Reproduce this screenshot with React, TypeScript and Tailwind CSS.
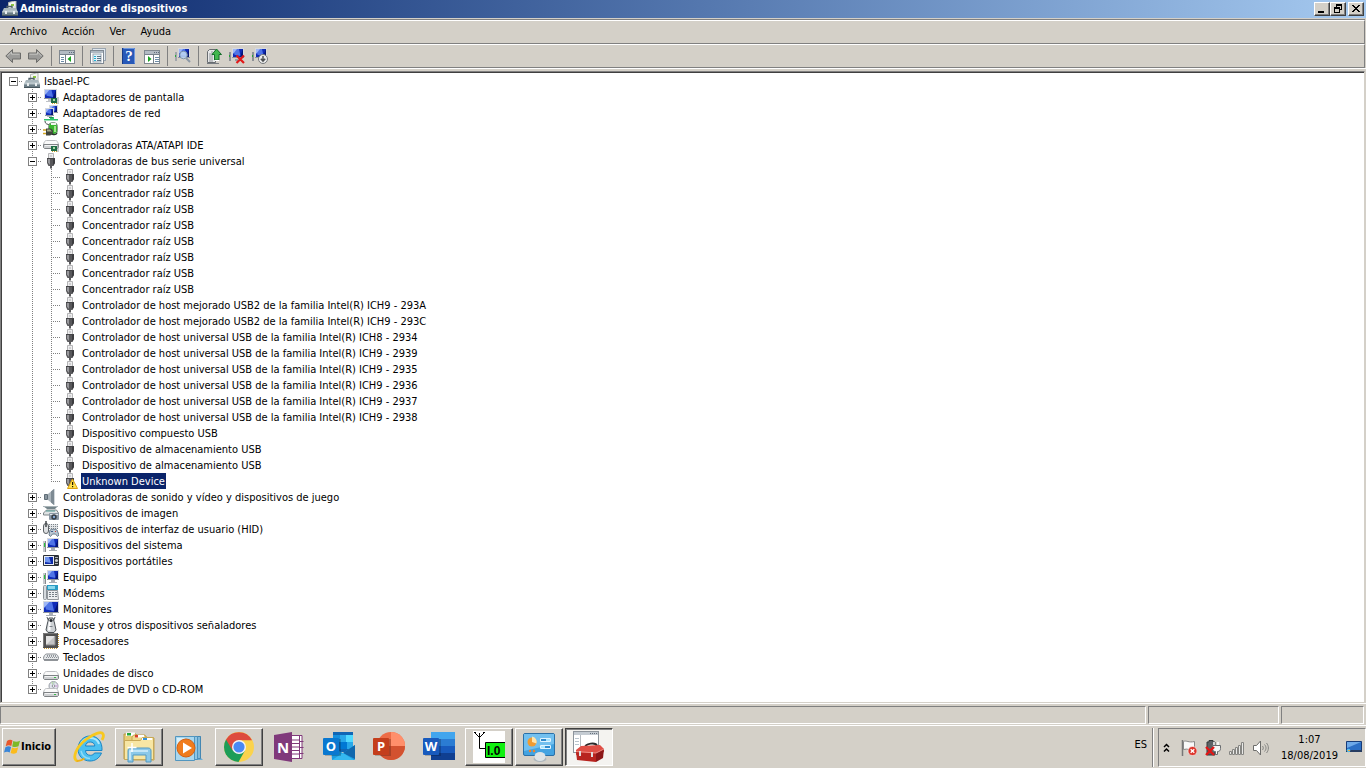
import { useState } from 'react'
import type { ReactNode } from 'react'

type TreeGroup = {
  name: string
  icon: ReactNode
  children?: string[]
}

type IconProps = { size?: number; children: ReactNode }

const RAISED =
  'border border-t-white border-l-white border-r-[#404040] border-b-[#404040] shadow-[inset_-1px_-1px_0_#808080]'
const SUNKEN = 'border border-t-[#808080] border-l-[#808080] border-r-white border-b-white'

function Icon({ size = 16, children }: IconProps) {
  return (
    <svg width={size} height={size} viewBox={`0 0 ${size} ${size}`} className="block shrink-0" aria-hidden="true">
      {children}
    </svg>
  )
}

/* ---------- tree icons, 16x16 ---------- */

function ComputerToolIcon() {
  return (
    <Icon>
      <path d="M6.5 1.500l6-1.500h1.500v9H6.500z" fill="#f3f4f2" stroke="#b0b4b2" />
      <path d="M9 3h3v2H9z" fill="#8cc63f" />
      <path d="M8 5h5v3H8z" fill="#dfe3e2" />
      <path d="M5 8V5.500h5V8" fill="none" stroke="#4f6068" strokeWidth="1.300" />
      <path d="M2 7h12l2 4H0z" fill="#a9b7bd" />
      <path d="M0 11h16v4H0z" fill="#6b7d86" />
      <path d="M0 11h16M1 10h14" stroke="#c6d0d4" strokeWidth="0.800" />
      <path d="M0 14.500h16" stroke="#46545b" />
      <path d="M3 10h2v3H3zM11 10h2v3h-2z" fill="#e9eef0" />
    </Icon>
  )
}

function Screen({ x = 2, y = 1, w = 12, h = 9 }: { x?: number; y?: number; w?: number; h?: number }) {
  return (
    <g>
      <rect x={x} y={y} width={w} height={h} fill="#d6d9de" />
      <path d={`M${x} ${y + h - 0.5}h${w}`} stroke="#8f959d" />
      <rect x={x + 1} y={y + 1} width={w - 2} height={h - 2} fill="#0f2bb8" />
      <path d={`M${x + 1} ${y + 1}h${w / 2}l${w / 8} ${h - 3}l${-w / 2} ${-h / 8}z`} fill="#4f74e6" />
      <path d={`M${x + 1} ${y + 1}h${w / 3}l-${w / 3} ${h / 2}z`} fill="#9db6f6" />
      <path d={`M${x + w - 1} ${y + 1}v${h - 2}h-${w / 4}z`} fill="#061674" />
    </g>
  )
}

function DisplayIcon() {
  return (
    <Icon>
      <Screen x={1} y={0} w={13} h={10} />
      <path d="M5 10h4v2H5zM3 12h6v1H3z" fill="#c0c3c8" />
      <rect x="8" y="9" width="6" height="5" fill="#1e6b45" />
      <path d="M10 10h2v2h-2z" fill="#a8d9a4" />
      <path d="M9 14h1v1H9zM11 14h1v1h-1zM13 14h1v1h-1z" fill="#d5a733" />
      <path d="M15 8v7" stroke="#8f9797" />
    </Icon>
  )
}

function NetworkIcon() {
  return (
    <Icon>
      <Screen x={6} y={0} w={9} h={8} />
      <Screen x={2} y={3} w={9} h={8} />
      <path d="M4 11h5v1H4z" fill="#b5bac2" />
      <path d="M7 12h4v2h4v1.500H1V14h6z" fill="#31c26b" />
      <path d="M6 12.500h4" stroke="#1d8f4a" />
    </Icon>
  )
}

function BatteryIcon() {
  return (
    <Icon>
      <path d="M2 0c0 3 2 3 5 4" fill="none" stroke="#42494a" />
      <rect x="5.500" y="1.500" width="9" height="12" rx="4" fill="#38b72f" stroke="#8b968e" />
      <path d="M8 2h5v2H8z" fill="#f2f6f0" />
      <path d="M11 5h2v6h-2z" fill="#a4e68e" />
      <path d="M0 9h4M0 12.500h4" stroke="#d4a724" strokeWidth="1.500" />
      <path d="M3 7.500h4c2 0 3 1.500 3 3s-1 4-3 4H3z" fill="#41453d" />
      <path d="M4 8.500h3l2 2H4z" fill="#a3a98a" />
      <path d="M9 13c3 1 4 1 5-1" fill="none" stroke="#2d302d" strokeWidth="1.400" />
    </Icon>
  )
}

function DriveShape({ y = 0 }: { y?: number }) {
  return (
    <g transform={`translate(0 ${y})`}>
      <path d="M3.500 4.500h9c1.500 0 2.500 1.500 3 4H0.500c0.500-2.500 1.500-4 3-4z" fill="#fafafa" stroke="#bcbec1" />
      <path d="M0.500 8.500h15v3l-1 1h-13l-1-1z" fill="#cfd1d3" stroke="#7e8285" />
      <path d="M2 9.500h12" stroke="#f2f3f4" />
      <path d="M11 10h2v1h-2z" fill="#39b64a" />
    </g>
  )
}

function IdeIcon() {
  return (
    <Icon>
      <DriveShape y={-1} />
      <rect x="8" y="9" width="6" height="5" fill="#1e6b45" />
      <path d="M10 10h2v2h-2z" fill="#a8d9a4" />
      <path d="M9 14h1v1H9zM11 14h1v1h-1zM13 14h1v1h-1z" fill="#c7a02d" />
      <path d="M15 8v7" stroke="#8f9797" />
    </Icon>
  )
}

function UsbShape() {
  return (
    <g>
      <path d="M5.500 0.500h5v5h-5z" fill="#ededee" stroke="#b4b4b6" />
      <path d="M7 2h2v2H7z" fill="#cfcfd1" />
      <path d="M4 5h8v5l-1.500 3H9v2.500H7V13H5.500L4 10z" fill="#58585b" />
      <path d="M5 6h2v6l-2-2.500z" fill="#98989c" />
      <path d="M10 6h2v4l-2 2.500z" fill="#3c3c3f" />
      <path d="M4 5.500h8" stroke="#444447" />
    </g>
  )
}

function UsbIcon() {
  return (
    <Icon>
      <UsbShape />
    </Icon>
  )
}

function UsbWarningIcon() {
  return (
    <Icon>
      <UsbShape />
      <path d="M10.500 6L15.500 15.500H5.500z" fill="#ffe04a" stroke="#dba012" strokeLinejoin="round" />
      <path d="M10 9h1.200v3H10zM10 13h1.200v1.300H10z" fill="#1c1500" />
    </Icon>
  )
}

function SoundIcon() {
  return (
    <Icon>
      <path d="M1.500 5.500h3v5h-3z" fill="#8a969f" stroke="#5f6c76" />
      <path d="M5 5L11 0v16L5 11z" fill="#aab4bb" />
      <path d="M8 2.500L11 0v16l-3-2.500z" fill="#7d8a93" />
      <path d="M11.500 0v16" stroke="#d2d8dc" />
    </Icon>
  )
}

function ImagingIcon() {
  return (
    <Icon>
      <path d="M0 1h15l-3 3H4z" fill="#75858b" />
      <path d="M0 1.500h15" stroke="#a9b4b8" />
      <path d="M0.500 8l3-3h10l2 3v2H0.500z" fill="#dfe3e4" stroke="#7a8488" />
      <path d="M3 6h9" stroke="#4f9a93" />
      <rect x="6" y="8" width="10" height="7" rx="1" fill="#8b98a5" />
      <rect x="7" y="9" width="8" height="1" fill="#dde3e8" />
      <circle cx="11" cy="12" r="2.700" fill="#343c44" />
      <circle cx="11" cy="12" r="1.200" fill="#83a8d6" />
    </Icon>
  )
}

function HidIcon() {
  return (
    <Icon>
      <rect x="0.500" y="2.500" width="5" height="10" rx="2.500" fill="#dfe1e3" stroke="#5c6165" />
      <path d="M3 0v6" stroke="#41464a" strokeWidth="1.500" />
      <path d="M6 3h9v5H6z" fill="#e2e5e7" />
      <path d="M6 3.500h9M6 5.500h9M6 7.500h9" stroke="#7b8288" strokeDasharray="1 1" />
      <path d="M7 9c2-1 5-1 7 0l2 5-1.500 1.500-2-2.500h-3l-2 2.500L6 14z" fill="#bac7d2" stroke="#6d7f8e" />
      <path d="M8 10h2v1H8z" fill="#3c5c88" />
      <path d="M12 10h1v1h-1z" fill="#cf3d33" />
    </Icon>
  )
}

function SystemIcon() {
  return (
    <Icon>
      <path d="M0 4h3v11H0z" fill="#c5c9cd" />
      <path d="M2.500 4v11" stroke="#858a8f" />
      <path d="M1 6h1v4H1z" fill="#26c43a" />
      <Screen x={4} y={1} w={12} h={10} />
      <path d="M8 11h4v2H8zM6 13h8v1H6z" fill="#a9aeb5" />
    </Icon>
  )
}

function PortableIcon() {
  return (
    <Icon>
      <rect x="0" y="2" width="16" height="11" rx="1" fill="#2c3138" />
      <rect x="1" y="3" width="10" height="9" fill="#e8ecf2" />
      <rect x="2" y="4" width="8" height="7" fill="#0d2aa8" />
      <path d="M2 4h4l2 6-6-1z" fill="#6f94ef" />
      <circle cx="13.500" cy="7.500" r="1.600" fill="#c9cdd2" />
      <path d="M12 4.500h3M12 10.500h3" stroke="#aeb4ba" />
    </Icon>
  )
}

function ModemIcon() {
  return (
    <Icon>
      <rect x="0.500" y="0.500" width="3" height="14" rx="1" fill="#d6dade" stroke="#8b9197" />
      <path d="M4 0h11v5H4z" fill="#2a9cc4" />
      <path d="M5 1h7v3H5z" fill="#8ad8ec" />
      <path d="M4.500 5.500h10l1 9h-11z" fill="#eceef0" stroke="#92979c" />
      <path d="M6 7.500h8M6 9.500h8M6 11.500h8" stroke="#777f87" strokeDasharray="2 1" />
    </Icon>
  )
}

function MonitorIcon() {
  return (
    <Icon>
      <Screen x={0} y={0} w={16} h={12} />
      <path d="M6 12h4v2H6zM3 14h10v1H3z" fill="#a9aeb5" />
    </Icon>
  )
}

function MouseIcon() {
  return (
    <Icon>
      <path d="M4 0l1.500 4M12 0l-1.500 4" stroke="#555c61" />
      <path d="M6 1h4l1.500 5 1.500 7-2 2.500H5L3 13l1.500-7z" fill="#cdd1d4" stroke="#4a5055" />
      <path d="M6 2.500L5 13.500h2.500V2.500z" fill="#fff" />
      <circle cx="8" cy="3.500" r="1.600" fill="#252b30" />
      <path d="M6.500 9h3v1h-3z" fill="#7a8188" />
    </Icon>
  )
}

function CpuIcon() {
  return (
    <Icon>
      <path d="M1 15.500h14M15.500 1v14" stroke="#c79a34" strokeDasharray="1 1" />
      <rect x="0" y="0" width="15" height="15" fill="#505050" />
      <path d="M0.500 14V0.500H14" fill="none" stroke="#7a7a7a" />
      <rect x="3" y="3" width="9" height="9" fill="#c4c4c4" />
      <path d="M3 12V3h9z" fill="#e2e2e2" />
      <path d="M3 12h9V3" fill="none" stroke="#8b8b8b" />
    </Icon>
  )
}

function KeyboardIcon() {
  return (
    <Icon>
      <path d="M3.500 5h9c1.500 0 3 2.500 3 4.500 0 1-0.500 1.500-1.500 1.500H2c-1 0-1.500-0.500-1.500-1.500C0.500 7.500 2 5 3.500 5z" fill="#e6e8ea" stroke="#868b90" />
      <path d="M4 6.500h9M3 8.500h11" stroke="#8b9197" strokeDasharray="1 1" />
      <path d="M3 7.500h10" stroke="#9ca1a6" strokeDasharray="1 1" strokeDashoffset="1" />
      <path d="M1 11h14" stroke="#5f656b" />
    </Icon>
  )
}

function DiskIcon() {
  return (
    <Icon>
      <DriveShape y={2} />
    </Icon>
  )
}

function DvdIcon() {
  return (
    <Icon>
      <circle cx="10.500" cy="5" r="4.500" fill="#e3e6ee" stroke="#989ca5" />
      <path d="M10.500 5L8 1.500l4-1z" fill="#b6dca9" />
      <path d="M10.500 5l4-1.500v3z" fill="#d6b8df" />
      <DriveShape y={3} />
      <circle cx="10.500" cy="5" r="1.300" fill="#fff" stroke="#8c9099" />
      <path d="M10.500 1v3" stroke="#c0c6d6" />
    </Icon>
  )
}

/* ---------- toolbar icons ---------- */

function ArrowIcon({ flip = false }: { flip?: boolean }) {
  return (
    <Icon>
      <g transform={flip ? 'translate(16 0) scale(-1 1)' : undefined}>
        <path d="M0.800 8L7.500 1.500V5h8v6h-8v3.500z" fill="#9b9b99" stroke="#6c6c6a" strokeLinejoin="round" />
        <path d="M2.500 8l4-4v2.200h8" fill="none" stroke="#c4c4c1" />
      </g>
    </Icon>
  )
}

function ConsoleTreeIcon({ right = false }: { right?: boolean }) {
  return (
    <Icon>
      <rect x="0.500" y="2.500" width="15" height="13" fill="#fff" stroke="#808890" />
      <rect x="1" y="3" width="14" height="3" fill="#b3bbc4" />
      <path d="M10 4.500h5" stroke="#5f6c7b" strokeDasharray="1 1" />
      <path d="M1 6.500h14" stroke="#77818c" />
      <path d={right ? 'M9.500 7v8' : 'M6.500 7v8'} stroke="#77818c" />
      <path d={right ? 'M11 9.500h4M11 11.500h4M11 13.500h4' : 'M2 9.500h3M2 11.500h3M2 13.500h3'} stroke="#6c8ca8" />
      <path d={right ? 'M4 8l3.500 3L4 14z' : 'M12 8l-3.500 3L12 14z'} fill="#1aa321" />
    </Icon>
  )
}

function PropertiesIcon() {
  return (
    <Icon>
      <rect x="2.500" y="0.500" width="13" height="12" fill="#dfe7ef" stroke="#9ba5af" />
      <rect x="0.500" y="2.500" width="13" height="13" fill="#fff" stroke="#7f8993" />
      <path d="M1 4h12" stroke="#aeb8c2" strokeWidth="2" />
      <rect x="3" y="6" width="8" height="8" fill="#e3f3fb" stroke="#9aa5b0" />
      <path d="M4 8.500h2M4 10.500h2M4 12.500h2" stroke="#1bb2d4" />
      <path d="M7 8.500h4M7 10.500h4M7 12.500h4" stroke="#5f7385" />
    </Icon>
  )
}

function HelpIcon() {
  return (
    <Icon>
      <rect x="1" y="0" width="13" height="16" fill="#2859b8" />
      <path d="M1.500 0v16" stroke="#173b88" />
      <path d="M2.500 0.500h11v15" fill="none" stroke="#6f97dd" />
      <text x="8" y="13" textAnchor="middle" fontFamily="Liberation Serif, serif" fontWeight="bold" fontSize="15" fill="#fff">
        ?
      </text>
    </Icon>
  )
}

function ScanIcon() {
  return (
    <Icon>
      <path d="M0 4h2v9H0z" fill="#a2a6ac" />
      <path d="M0 7h1v2H0z" fill="#2bab3a" />
      <Screen x={3} y={0} w={12} h={10} />
      <circle cx="8.500" cy="7" r="3.800" fill="#c3dcf3" fillOpacity="0.850" stroke="#7f94aa" />
      <path d="M11 10l4 4" stroke="#8d98a5" strokeWidth="2" />
    </Icon>
  )
}

function UpdateDriverIcon() {
  return (
    <Icon>
      <path d="M1.500 3.500l2-2h6v13h-8z" fill="#e7e8e9" stroke="#686c70" />
      <path d="M4 5v9M6 3v11" stroke="#8f9498" />
      <path d="M1 15.500h12" stroke="#767b80" />
      <path d="M10.500 1L15.500 6.500H13V12H8.500V6.500H6z" fill="#41b74e" stroke="#146d2a" strokeLinejoin="round" />
      <path d="M8.500 12.500h4.500" stroke="#fff" />
    </Icon>
  )
}

function UninstallIcon() {
  return (
    <Icon>
      <path d="M1 4v9" stroke="#8d9196" strokeWidth="2" />
      <path d="M0 7h1v2H0z" fill="#26a437" />
      <Screen x={3} y={0} w={12} h={10} />
      <path d="M6 11h3v2H6z" fill="#999fa7" />
      <path d="M7.500 7.500l7.500 7.500M15 7.500L7.500 15" stroke="#e11919" strokeWidth="2.200" />
    </Icon>
  )
}

function DisableIcon() {
  return (
    <Icon>
      <path d="M1 4v9" stroke="#8d9196" strokeWidth="2" />
      <path d="M0 7h1v2H0z" fill="#26a437" />
      <Screen x={3} y={0} w={12} h={10} />
      <circle cx="11" cy="11" r="4.500" fill="#ececec" stroke="#75787b" />
      <path d="M11 8v5M8.800 10.800L11 13.200l2.200-2.400" fill="none" stroke="#4d5052" strokeWidth="1.500" />
    </Icon>
  )
}

/* ---------- taskbar icons, 32x32 ---------- */

function WindowsFlagIcon() {
  return (
    <Icon>
      <path d="M3 2c2-1.500 4-1.500 5.500-0.500L7.300 7C5.500 6.100 4 6.100 1.700 7.200z" fill="#e8572b" />
      <path d="M9.300 2c2 1 4 1 6.700-0.200L14.500 7.300c-2.200 1.100-4.300 1-6.300 0.100z" fill="#7db928" />
      <path d="M1.400 8.200c2.200-1.200 4-1.100 5.700-0.200L5.700 13.500C4 12.500 2.200 12.500 0 13.500z" fill="#3a86d8" />
      <path d="M8 8.400c1.900 1 4 1 6.200-0.200l-1.500 5.500c-2.200 1.200-4.100 1.200-6.100 0.200z" fill="#fbbb1c" />
    </Icon>
  )
}

function ExplorerBrowserIcon() {
  return (
    <Icon size={32}>
      <path
        d="M28.500 22C26 28 21.500 30 17 30 10 30 5 25 5 18S10 5 17 5c7.500 0 12.500 5.500 12 14.500H12.500c0 3 2 4.800 5 4.800 2 0 3.300-0.800 4-2.300zM12.500 15h9.300c-0.300-2.600-2-4-4.600-4s-4.400 1.400-4.700 4z"
        fill="#4cc0f0"
        stroke="#1b86c6"
      />
      <path d="M8 13c2-4 5-6 9-6 4.500 0 8 2.500 9 6" fill="none" stroke="#aee8fc" strokeWidth="2" />
      <path d="M8 20c1 4 4 7.500 9 7.500" fill="none" stroke="#8fdcf8" strokeWidth="1.500" />
      <path d="M4 30C-1 27 3 16 13 8.500 21 2.500 28.500 0 30 3c0.800 1.500 0.500 3.500-1 6" fill="none" stroke="#f8c81f" strokeWidth="2.800" />
      <path d="M3.500 30c3 0.500 5-0.500 8-2.500" fill="none" stroke="#eeb118" strokeWidth="2" />
    </Icon>
  )
}

function FoldersIcon() {
  return (
    <Icon size={32}>
      <path d="M1 3h12l2 3h9v22H1z" fill="#e7cd77" stroke="#b99a45" />
      <path d="M3 1.500h9V5H3z" fill="#fff" />
      <path d="M4 2h4v2.500H4z" fill="#25a83c" />
      <path d="M9 6l1.500-2H22l1.500 3H31v22H9z" fill="#f0da8d" stroke="#c3a451" />
      <path d="M12 4h9v2.500h-9z" fill="#fff" />
      <path d="M12 4h3v2.500h-3z" fill="#d8402b" />
      <path d="M1.500 9.500h16l2-3h11v22h-29z" fill="#f7e6a4" stroke="#c8a957" />
      <path d="M19 7h10v2H19z" fill="#fff" />
      <path d="M20 7h4v2h-4z" fill="#3592da" />
      <path d="M5 31V20c0-2 1-3 3-3h17c2 0 3 1 3 3v11h-5v-7H10v7z" fill="#8cc9e9" stroke="#5299c1" />
      <path d="M7 29v-9h18" fill="none" stroke="#d5effb" strokeWidth="1.500" />
      <path d="M9 12v9M4.500 16.500h9" stroke="#fff" strokeWidth="1.500" />
    </Icon>
  )
}

function MediaPlayerIcon() {
  return (
    <Icon size={32}>
      <path d="M10 5h18v22l2 2H10z" fill="#6faed3" />
      <path d="M10 5.500h17.500v22L10 29z" fill="#7fb9da" stroke="#4487b2" />
      <path d="M7 5.500h17.500v23H7z" fill="#8fc6e4" stroke="#4c92bd" />
      <path d="M2.500 5.500h19v24h-19z" fill="#a9d7ee" stroke="#5296bf" />
      <path d="M4 7h8L4 20z" fill="#d9f0fa" />
      <circle cx="13" cy="17" r="9" fill="#f07c1d" stroke="#d45f10" />
      <path d="M10 11.500l9 5.500-9 5.500z" fill="#fff" />
    </Icon>
  )
}

function ChromeIcon() {
  return (
    <Icon size={32}>
      <circle cx="16" cy="16" r="15" fill="#fbd34c" />
      <path d="M3 8.500A15 15 0 0 0 15.500 31L22 19.500 16 16z" fill="#1c9d58" />
      <path d="M3 8.500L9.500 19.500 16 9.200h13A15 15 0 0 0 3 8.500z" fill="#dd4b3e" />
      <circle cx="16" cy="16" r="7" fill="#f4f4f4" />
      <circle cx="16" cy="16" r="5.600" fill="#4a89f4" />
    </Icon>
  )
}

function OneNoteIcon() {
  return (
    <Icon size={32}>
      <path d="M17 4.500h12v23H17z" fill="#fff" stroke="#80397b" />
      <path d="M18 9h8M18 12.500h8M18 16h8M18 19.500h8M18 23h8" stroke="#80397b" />
      <path d="M26.500 5v22M27 10.500h3.500M27 16.500h3.500M27 22.500h3.500" stroke="#80397b" />
      <path d="M1 4l18-3v30L1 28z" fill="#80397b" />
      <text x="10" y="21.500" textAnchor="middle" fontFamily="Open Sans, sans-serif" fontWeight="bold" fontSize="15" fill="#fff">
        N
      </text>
    </Icon>
  )
}

function LetterTile({ letter, color }: { letter: string; color: string }) {
  return (
    <g>
      <path d="M2 8h16v17H2z" fill="#000" fillOpacity="0.200" />
      <rect x="0" y="7" width="16" height="17" rx="1" fill={color} />
      <text x="8" y="20" textAnchor="middle" fontFamily="Open Sans, sans-serif" fontWeight="bold" fontSize="13" fill="#fff">
        {letter}
      </text>
    </g>
  )
}

function OutlookIcon() {
  return (
    <Icon size={32}>
      <rect x="10" y="1" width="20" height="20" fill="#1066b5" />
      <path d="M10 4h7v7h-7z" fill="#1490df" />
      <path d="M17 4h6v7h-6z" fill="#28a8ea" />
      <path d="M23 4h7v7h-7z" fill="#50d9ff" />
      <path d="M17 11h7v7h-7z" fill="#0078d4" />
      <path d="M24 11h6v7h-6z" fill="#28a8ea" />
      <path d="M8 16l12 6 12-8v14c0 1-1 1-1 1H9z" fill="#1b9de2" />
      <path d="M32 14v14L20 22z" fill="#1167ad" />
      <path d="M9 29l11-7 11 7z" fill="#35b8f1" />
      <LetterTile letter="O" color="#0a78d0" />
    </Icon>
  )
}

function PowerPointIcon() {
  return (
    <Icon size={32}>
      <circle cx="18" cy="15" r="14" fill="#ed6c47" />
      <path d="M18 1a14 14 0 0 1 14 14H18z" fill="#ff8f6b" />
      <path d="M4 15h28a14 14 0 0 1-28 0z" fill="#d35230" />
      <LetterTile letter="P" color="#c43e1c" />
    </Icon>
  )
}

function WordIcon() {
  return (
    <Icon size={32}>
      <path d="M8 1h24v7H8z" fill="#41a5ee" />
      <path d="M8 8h24v7H8z" fill="#2b7cd3" />
      <path d="M8 15h24v7H8z" fill="#185abd" />
      <path d="M8 22h24v7H8z" fill="#103f91" />
      <LetterTile letter="W" color="#185abd" />
    </Icon>
  )
}

function AntennaAppIcon() {
  return (
    <Icon size={32}>
      <rect width="32" height="32" fill="#fff" />
      <path d="M6.500 2v15.500H12M1.500 1.500l5 5 5-5M1 1.500h2M10 1.500h2" fill="none" stroke="#000" />
      <path d="M32 11.500H12.500v15H32" fill="#10f010" stroke="#000" />
      <text x="14" y="24" fontFamily="Liberation Sans, sans-serif" fontWeight="bold" fontSize="12" fill="#000">
        I.0
      </text>
    </Icon>
  )
}

function ControlPanelIcon() {
  return (
    <Icon size={32}>
      <rect x="0.500" y="2.500" width="31" height="22" rx="1.500" fill="#43a3e1" stroke="#2b70a7" />
      <path d="M1 3h30v10L1 20z" fill="#72c0ef" />
      <circle cx="9" cy="11" r="4.500" fill="#f09b32" />
      <path d="M9 11V5.500a5.500 5.500 0 0 1 4.500 7z" fill="#ffe4aa" />
      <circle cx="7" cy="20" r="1.200" fill="#f2832b" />
      <circle cx="11" cy="20" r="1.200" fill="#f2832b" />
      <path d="M17.500 7.500h10v3h-10zM17.500 14.500h10v3h-10z" fill="#318bcd" stroke="#e0f4ff" />
      <path d="M23 8h4v2h-4zM18 15h4v2h-4z" fill="#a6e4ff" />
      <ellipse cx="17" cy="28" rx="6.500" ry="3" fill="#aeb7bd" />
      <ellipse cx="17" cy="25.500" rx="5.500" ry="4.500" fill="#dde3e6" />
    </Icon>
  )
}

function ToolboxIcon() {
  return (
    <Icon size={32}>
      <rect x="0.500" y="0.500" width="25" height="21" fill="#fff" stroke="#8d949b" />
      <path d="M1 2.500h24" stroke="#c4cbd2" strokeWidth="3" />
      <path d="M17 2.500h7" stroke="#65707b" strokeDasharray="1 1" />
      <path d="M7.500 4v17" stroke="#b5bbc0" />
      <path d="M2 7.500h4M2 10.500h4M2 13.500h4" stroke="#b9c4cd" />
      <path d="M12 17c0-5 11-6 12-2" fill="none" stroke="#2b2b2b" strokeWidth="2" />
      <path d="M3 19l5-4 19-1 4 4v3L3 24z" fill="#df4e45" />
      <path d="M3 21l20 1v9L4 29z" fill="#b8241f" />
      <path d="M23 22l8-4-1 9-7 4z" fill="#8c1719" />
      <path d="M3 20.500l20 1.500 8-4" fill="none" stroke="#f08a80" />
      <path d="M6 20h2v5H6zM18 21h2v5h-2z" fill="#dedede" />
    </Icon>
  )
}

/* ---------- tray icons ---------- */

function ActionFlagIcon() {
  return (
    <Icon>
      <path d="M1.500 0v16" stroke="#777" strokeWidth="1.500" />
      <path d="M2.500 1.500c3-1.500 5 1.500 11 0v8c-4 1.500-7-1.500-11 0z" fill="#f9f9f9" stroke="#888" />
      <circle cx="11.500" cy="11" r="4.500" fill="#dc3329" stroke="#fff" strokeWidth="0.600" />
      <path d="M9.700 9.200l3.600 3.600M13.300 9.200l-3.600 3.600" stroke="#fff" strokeWidth="1.400" />
    </Icon>
  )
}

function PowerIcon() {
  return (
    <Icon>
      <path d="M2 2h2V0.500h4V2h2v13H2z" fill="#5e6265" stroke="#34383a" />
      <path d="M9 2v4M13 2v4" stroke="#fff" strokeWidth="1.500" />
      <path d="M7.500 5.500h8v3c0 2-1 3-3 3v3h-2v-3c-2 0-3-1-3-3z" fill="#f6f6f6" stroke="#696d70" />
      <path d="M1 7l8 8M9 7l-8 8" stroke="#e31616" strokeWidth="2.400" />
    </Icon>
  )
}

function SignalIcon() {
  return (
    <Icon>
      <path
        d="M0.500 11.500h2v3h-2zM3.500 9.500h2v5h-2zM6.500 7.500h2v7h-2zM9.500 5.500h2v9h-2zM12.500 2.500h2v12h-2z"
        fill="#e9e9e7"
        stroke="#858582"
      />
    </Icon>
  )
}

function VolumeIcon() {
  return (
    <Icon>
      <path d="M0.500 5.500h3l4-4.500v14l-4-4.500h-3z" fill="#fff" stroke="#6c6c6a" />
      <path d="M9.500 6c1 1.300 1 2.700 0 4M11.500 4.500c2 2.200 2 4.800 0 7M13.500 3c2.500 3 2.500 7 0 10" fill="none" stroke="#858582" />
    </Icon>
  )
}

function DesktopIcon() {
  return (
    <Icon>
      <path d="M0.500 1.500h15v9h-15z" fill="#2c6fc5" stroke="#163b78" />
      <path d="M1 2h14L1 8z" fill="#6ea9e8" />
      <path d="M0 10h16v2H0z" fill="#263c61" />
      <circle cx="2.500" cy="10.500" r="1.800" fill="#53c0ed" />
      <path d="M2 10h2v1H2z" fill="#f5a936" />
    </Icon>
  )
}

/* ---------- data ---------- */

const USB_DEVICES = [
  ...Array.from({ length: 8 }, () => 'Concentrador raíz USB'),
  'Controlador de host mejorado USB2 de la familia Intel(R) ICH9 - 293A',
  'Controlador de host mejorado USB2 de la familia Intel(R) ICH9 - 293C',
  'Controlador de host universal USB de la familia Intel(R) ICH8 - 2934',
  'Controlador de host universal USB de la familia Intel(R) ICH9 - 2939',
  'Controlador de host universal USB de la familia Intel(R) ICH9 - 2935',
  'Controlador de host universal USB de la familia Intel(R) ICH9 - 2936',
  'Controlador de host universal USB de la familia Intel(R) ICH9 - 2937',
  'Controlador de host universal USB de la familia Intel(R) ICH9 - 2938',
  'Dispositivo compuesto USB',
  'Dispositivo de almacenamiento USB',
  'Dispositivo de almacenamiento USB',
  'Unknown Device',
]

const GROUPS: TreeGroup[] = [
  { name: 'Adaptadores de pantalla', icon: <DisplayIcon /> },
  { name: 'Adaptadores de red', icon: <NetworkIcon /> },
  { name: 'Baterías', icon: <BatteryIcon /> },
  { name: 'Controladoras ATA/ATAPI IDE', icon: <IdeIcon /> },
  { name: 'Controladoras de bus serie universal', icon: <UsbIcon />, children: USB_DEVICES },
  { name: 'Controladoras de sonido y vídeo y dispositivos de juego', icon: <SoundIcon /> },
  { name: 'Dispositivos de imagen', icon: <ImagingIcon /> },
  { name: 'Dispositivos de interfaz de usuario (HID)', icon: <HidIcon /> },
  { name: 'Dispositivos del sistema', icon: <SystemIcon /> },
  { name: 'Dispositivos portátiles', icon: <PortableIcon /> },
  { name: 'Equipo', icon: <SystemIcon /> },
  { name: 'Módems', icon: <ModemIcon /> },
  { name: 'Monitores', icon: <MonitorIcon /> },
  { name: 'Mouse y otros dispositivos señaladores', icon: <MouseIcon /> },
  { name: 'Procesadores', icon: <CpuIcon /> },
  { name: 'Teclados', icon: <KeyboardIcon /> },
  { name: 'Unidades de disco', icon: <DiskIcon /> },
  { name: 'Unidades de DVD o CD-ROM', icon: <DvdIcon /> },
]

const TOOLBAR: { label: string; icon: ReactNode }[][] = [
  [
    { label: 'Atrás', icon: <ArrowIcon /> },
    { label: 'Adelante', icon: <ArrowIcon flip /> },
  ],
  [{ label: 'Árbol de consola', icon: <ConsoleTreeIcon /> }],
  [{ label: 'Propiedades', icon: <PropertiesIcon /> }],
  [
    { label: 'Ayuda', icon: <HelpIcon /> },
    { label: 'Panel de acciones', icon: <ConsoleTreeIcon right /> },
  ],
  [{ label: 'Buscar cambios de hardware', icon: <ScanIcon /> }],
  [
    { label: 'Actualizar controlador', icon: <UpdateDriverIcon /> },
    { label: 'Desinstalar', icon: <UninstallIcon /> },
    { label: 'Deshabilitar', icon: <DisableIcon /> },
  ],
]

const TASKS: { label: string; icon: ReactNode; state: 'pinned' | 'open' | 'active' }[] = [
  { label: 'Internet Explorer', icon: <ExplorerBrowserIcon />, state: 'pinned' },
  { label: 'Explorador de Windows', icon: <FoldersIcon />, state: 'open' },
  { label: 'Reproductor de Windows Media', icon: <MediaPlayerIcon />, state: 'pinned' },
  { label: 'Google Chrome', icon: <ChromeIcon />, state: 'open' },
  { label: 'OneNote', icon: <OneNoteIcon />, state: 'pinned' },
  { label: 'Outlook', icon: <OutlookIcon />, state: 'pinned' },
  { label: 'PowerPoint', icon: <PowerPointIcon />, state: 'pinned' },
  { label: 'Word', icon: <WordIcon />, state: 'pinned' },
  { label: 'Antena', icon: <AntennaAppIcon />, state: 'open' },
  { label: 'Panel de control', icon: <ControlPanelIcon />, state: 'open' },
  { label: 'Administrador de dispositivos', icon: <ToolboxIcon />, state: 'active' },
]

const TASK_STYLE = {
  pinned: '',
  open: RAISED,
  active:
    'border border-t-[#404040] border-l-[#404040] border-r-white border-b-white bg-[#f4f3f0] shadow-[inset_1px_1px_0_#808080]',
}

/* ---------- tree ---------- */

function Expander({ open, label, onClick }: { open: boolean; label: string; onClick: () => void }) {
  return (
    <button type="button" aria-label={label} aria-expanded={open} onClick={onClick} className="block size-[9px] bg-white">
      <svg width="9" height="9" viewBox="0 0 9 9" className="block" shapeRendering="crispEdges">
        <rect x="0.500" y="0.500" width="8" height="8" fill="#fff" stroke="#808080" />
        <path d={open ? 'M2 4.500h5' : 'M2 4.500h5M4.500 2v5'} stroke="#000" />
      </svg>
    </button>
  )
}

const DOTS =
  'bg-[image:repeating-linear-gradient(#808080_0_1px,transparent_1px_2px),repeating-linear-gradient(90deg,#808080_0_1px,transparent_1px_2px)] bg-no-repeat bg-[position:9px_0,9px_8px]'

/** Celda de 19px con la guía punteada; el nodo final solo dibuja la mitad superior. */
function Cell({ guide, children }: { guide: 'none' | 'root' | 'line' | 'branch' | 'last'; children?: ReactNode }) {
  const size = {
    none: 'bg-none',
    root: `${DOTS} bg-[length:0px_0px,10px_1px]`,
    line: `${DOTS} bg-[length:1px_16px,0px_0px]`,
    branch: `${DOTS} bg-[length:1px_16px,10px_1px]`,
    last: `${DOTS} bg-[length:1px_9px,10px_1px]`,
  }[guide]
  return <span className={`flex h-4 w-[19px] shrink-0 items-center justify-center ${size}`}>{children}</span>
}

type NodeLabelProps = { icon: ReactNode; text: string; selected: boolean; onSelect: () => void }

function NodeLabel({ icon, text, selected, onSelect }: NodeLabelProps) {
  return (
    <button type="button" onClick={onSelect} className="ml-px flex h-4 items-center gap-[3px] whitespace-nowrap">
      {icon}
      <span className={`h-4 px-px leading-[17px] ${selected ? 'bg-[#0a246a] text-white' : ''}`}>{text}</span>
    </button>
  )
}

function DeviceTree() {
  const [rootOpen, setRootOpen] = useState(true)
  const [expanded, setExpanded] = useState<string[]>(['Controladoras de bus serie universal'])
  const [selected, setSelected] = useState('usb-19')

  const toggle = (name: string) =>
    setExpanded((prev) => (prev.includes(name) ? prev.filter((n) => n !== name) : [...prev, name]))

  return (
    <ul className="pl-0.5">
      <li>
        <div className="flex">
          <Cell guide="root">
            <Expander open={rootOpen} label="Isbael-PC" onClick={() => setRootOpen(!rootOpen)} />
          </Cell>
          <NodeLabel
            icon={<ComputerToolIcon />}
            text="Isbael-PC"
            selected={selected === 'root'}
            onSelect={() => setSelected('root')}
          />
        </div>
        {rootOpen && (
          <ul>
            {GROUPS.map((g, i) => {
              const open = expanded.includes(g.name)
              const last = i === GROUPS.length - 1
              return (
                <li key={g.name}>
                  <div className="flex">
                    <Cell guide="none" />
                    <Cell guide={last ? 'last' : 'branch'}>
                      <Expander open={open} label={g.name} onClick={() => toggle(g.name)} />
                    </Cell>
                    <NodeLabel
                      icon={g.icon}
                      text={g.name}
                      selected={selected === g.name}
                      onSelect={() => setSelected(g.name)}
                    />
                  </div>
                  {open && g.children && (
                    <ul>
                      {g.children.map((device, j) => {
                        const id = `usb-${j}`
                        return (
                          <li key={id} className="flex">
                            <Cell guide="none" />
                            <Cell guide={last ? 'none' : 'line'} />
                            <Cell guide={j === g.children!.length - 1 ? 'last' : 'branch'} />
                            <NodeLabel
                              icon={device === 'Unknown Device' ? <UsbWarningIcon /> : <UsbIcon />}
                              text={device}
                              selected={selected === id}
                              onSelect={() => setSelected(id)}
                            />
                          </li>
                        )
                      })}
                    </ul>
                  )}
                </li>
              )
            })}
          </ul>
        )}
      </li>
    </ul>
  )
}

/* ---------- window chrome ---------- */

function TitleButton({ label, children }: { label: string; children: ReactNode }) {
  return (
    <button type="button" aria-label={label} className={`h-[14px] w-4 bg-[#d4d0c8] ${RAISED}`}>
      <svg width="14" height="12" viewBox="0 0 14 12" className="block" shapeRendering="crispEdges">
        {children}
      </svg>
    </button>
  )
}

function TitleBar() {
  return (
    <header className="flex h-[18px] items-center justify-between bg-linear-to-r from-[#0a246a] to-[#a6caf0] px-0.5">
      <div className="flex items-center gap-0.5">
        <ComputerToolIcon />
        <h1 className="font-bold leading-[18px] text-white">Administrador de dispositivos</h1>
      </div>
      <div className="flex">
        <TitleButton label="Minimizar">
          <path d="M3 8h6v2H3z" />
        </TitleButton>
        <TitleButton label="Restaurar">
          <path d="M5 1h6v2H5zM10 3h1v4h-1zM5 3h1v1H5zM9 6h2v1H9zM3 4h6v2H3zM3 6h1v4H3zM8 6h1v4H8zM3 9h6v1H3z" />
        </TitleButton>
        <span className="w-0.5" />
        <TitleButton label="Cerrar">
          <path d="M3 2h2v1H3zM9 2h2v1H9zM4 3h2v1H4zM8 3h2v1H8zM5 4h4v1H5zM6 5h2v1H6zM5 6h4v1H5zM4 7h2v1H4zM8 7h2v1H8zM3 8h2v1H3zM9 8h2v1H9z" />
        </TitleButton>
      </div>
    </header>
  )
}

function MenuBar() {
  return (
    <nav className="flex h-6 items-center gap-[15px] border-y border-r border-t-white border-r-[#808080] border-b-[#808080] px-[10px]">
      {['Archivo', 'Acción', 'Ver', 'Ayuda'].map((item) => (
        <button key={item} type="button">
          {item}
        </button>
      ))}
    </nav>
  )
}

function Toolbar() {
  return (
    <div
      role="toolbar"
      className="flex h-6 items-center gap-[7px] border-y border-r border-t-white border-r-[#808080] border-b-[#808080] pl-[5px]"
    >
      {TOOLBAR.map((group, i) => (
        <div key={i} className="flex items-center gap-[7px]">
          {i > 0 && <span className="h-5 w-px bg-[#808080]" />}
          {group.map((b) => (
            <button key={b.label} type="button" aria-label={b.label} title={b.label}>
              {b.icon}
            </button>
          ))}
        </div>
      ))}
    </div>
  )
}

function StatusBar() {
  return (
    <footer className="flex h-[18px] gap-0.5 pr-0.5">
      <span className={`flex-1 ${SUNKEN}`} />
      <span className={`w-[131px] ${SUNKEN}`} />
      <span className={`w-[83px] ${SUNKEN}`} />
    </footer>
  )
}

function Taskbar() {
  return (
    <div className="mt-px flex h-[43px] justify-between border-t border-white pt-0.5 pb-px">
      <div className="flex h-[38px]">
        <button type="button" className={`ml-0.5 flex w-[54px] items-center gap-px pl-px font-bold ${RAISED}`}>
          <WindowsFlagIcon />
          Inicio
        </button>
        <div className="ml-[9px] flex gap-0.5">
          {TASKS.map((t) => (
            <button
              key={t.label}
              type="button"
              aria-label={t.label}
              className={`flex w-12 items-center justify-center ${TASK_STYLE[t.state]}`}
            >
              {t.icon}
            </button>
          ))}
        </div>
      </div>
      <div className="flex">
        <button type="button" className="h-[34px] px-1">
          ES
        </button>
        <span className="mx-px w-0.5 border-r border-l border-r-white border-l-[#808080]" />
        <div className={`ml-[3px] flex items-center gap-2 pr-[3px] pl-1 ${SUNKEN}`}>
          <button type="button" aria-label="Mostrar iconos ocultos" className="w-2">
            <svg width="7" height="10" viewBox="0 0 7 10" className="block">
              <path d="M1 4l2.500-2.500L6 4M1 8.500L3.500 6 6 8.500" fill="none" stroke="#000" strokeWidth="1.500" />
            </svg>
          </button>
          <div className="flex gap-2 pl-0.5">
            <ActionFlagIcon />
            <PowerIcon />
            <SignalIcon />
            <VolumeIcon />
          </div>
          <time className="ml-1 text-center leading-4">
            1:07
            <br />
            18/08/2019
          </time>
          <button type="button" aria-label="Mostrar escritorio">
            <DesktopIcon />
          </button>
        </div>
      </div>
    </div>
  )
}

export default function App() {
  return (
    <div className="flex min-h-screen flex-col bg-[#d4d0c8] font-['DejaVu_Sans_Condensed','DejaVu_Sans',sans-serif] text-[11px] leading-4 text-black">
      <TitleBar />
      <div className="mt-px mr-px border-[#808080]">
        <div className="border-t border-[#808080]">
          <MenuBar />
        </div>
        <Toolbar />
      </div>
      <div className="border-t border-white" />
      <main className="mt-0.5 mr-px flex flex-1 flex-col border-t border-r border-b border-l border-t-[#808080] border-r-[#d4d0c8] border-b-[#d4d0c8] border-l-[#808080]">
        <div className="flex-1 border-t border-l border-[#404040] bg-white">
          <DeviceTree />
        </div>
      </main>
      <div className="mb-0.5 border-t border-white" />
      <StatusBar />
      <Taskbar />
    </div>
  )
}
